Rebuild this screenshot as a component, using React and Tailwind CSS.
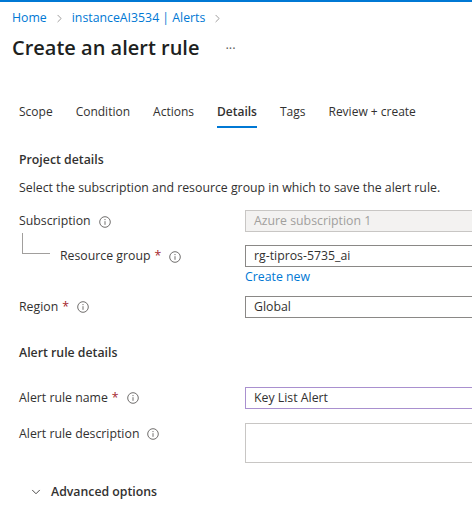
import { ChevronRight, ChevronDown } from 'lucide-react';

const font = { fontFamily: '"Open Sans", "Noto Sans", sans-serif' };

const tabs = ['Scope', 'Condition', 'Actions', 'Details', 'Tags', 'Review + create'];

const InfoIcon = () => (
  <svg width="12" height="12" viewBox="0 0 12 12" className="shrink-0 text-[#605e5c]">
    <circle cx="6" cy="6" r="5.3" fill="none" stroke="currentColor" strokeWidth="0.9" />
    <circle cx="6" cy="3.6" r="0.6" fill="currentColor" />
    <path d="M6 5.2v3.6" stroke="currentColor" strokeWidth="0.9" />
  </svg>
);

const Label = ({ text, required }) => (
  <div className="flex items-center gap-2 text-[12.3px] text-[#323130]">
    <span>
      {text}
      {required && <span className="text-[#a4262c] ml-1">*</span>}
    </span>
    <InfoIcon />
  </div>
);

const Input = ({ value, disabled, className = '' }) => (
  <div
    className={`ml-[245px] h-[22px] flex items-center pl-[8px] border border-r-0 text-[12.3px] ${
      disabled ? 'bg-[#f3f2f1] border-[#c8c6c4] text-[#a19f9d]' : 'bg-white border-[#8a8886] text-[#323130]'
    } ${className}`}
  >
    {value}
  </div>
);

export default function App() {
  return (
    <div className="w-[472px] h-[512px] bg-white overflow-hidden" style={font}>
      <div className="h-[2px] bg-[#0078d4]" />

      {/* breadcrumb */}
      <div className="flex items-center gap-[6px] pl-[12px] pt-[7px] text-[12.3px] text-[#0078d4]">
        <span>Home</span>
        <ChevronRight size={13} className="text-[#8a8886]" strokeWidth={1.5} />
        <span>instanceAI3534 | Alerts</span>
        <ChevronRight size={13} className="text-[#8a8886]" strokeWidth={1.5} />
      </div>

      {/* title */}
      <div className="flex items-center pl-[12px] mt-[6px]">
        <h1 className="text-[20px] font-semibold text-[#201f1e] leading-[30px]">Create an alert rule</h1>
        <span className="ml-[26px] text-[13px] text-[#605e5c] leading-none">···</span>
      </div>

      {/* tabs */}
      <div className="flex pl-[19px] gap-[23px] mt-[40px] text-[12px]">
        {tabs.map((t) => (
          <div key={t} className="flex flex-col items-center">
            <span className={t === 'Details' ? 'font-semibold text-[#323130]' : 'text-[#323130]'}>{t}</span>
            <div className={`h-[2px] w-full mt-[5px] ${t === 'Details' ? 'bg-[#0078d4]' : 'bg-transparent'}`} />
          </div>
        ))}
      </div>

      <div className="pl-[19px] mt-[23px] text-[12.3px] font-semibold text-[#323130]">Project details</div>
      <div className="pl-[19px] mt-[9px] text-[12.3px] text-[#323130]">
        Select the subscription and resource group in which to save the alert rule.
      </div>

      {/* subscription */}
      <div className="relative mt-[13px] h-[22px]">
        <div className="absolute left-[19px] top-[2px]">
          <Label text="Subscription" />
        </div>
        <Input value="Azure subscription 1" disabled />
      </div>

      {/* resource group */}
      <div className="relative mt-[13px]">
        <div className="absolute left-[22px] top-[-12px] w-[28px] h-[21px] border-l border-b border-[#a19f9d]" />
        <div className="absolute left-[60px] top-[2px]">
          <Label text="Resource group" required />
        </div>
        <Input value="rg-tipros-5735_ai" />
        <div className="ml-[245px] mt-[1px] text-[12.3px] text-[#0078d4]">Create new</div>
      </div>

      {/* region */}
      <div className="relative mt-[9px] h-[22px]">
        <div className="absolute left-[19px] top-[2px]">
          <Label text="Region" required />
        </div>
        <Input value="Global" />
      </div>

      <div className="pl-[19px] mt-[26px] text-[12.3px] font-semibold text-[#323130]">Alert rule details</div>

      {/* name */}
      <div className="relative mt-[25px] h-[22px]">
        <div className="absolute left-[19px] top-[2px]">
          <Label text="Alert rule name" required />
        </div>
        <Input value="Key List Alert" className="!border-[#a990cf]" />
      </div>

      {/* description */}
      <div className="relative mt-[14px]">
        <div className="absolute left-[19px] top-[2px]">
          <Label text="Alert rule description" />
        </div>
        <div className="ml-[245px] h-[40px] border border-r-0 border-[#c8c6c4] bg-white" />
      </div>

      <div className="flex items-center pl-[29px] mt-[20px] gap-[8px] text-[12.3px] font-semibold text-[#323130]">
        <ChevronDown size={14} strokeWidth={1.5} className="text-[#323130]" />
        <span>Advanced options</span>
      </div>
    </div>
  );
}
